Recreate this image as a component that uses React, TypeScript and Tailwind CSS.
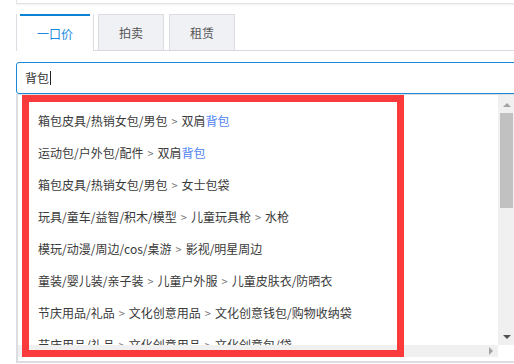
const font = { fontFamily: '"Noto Sans CJK SC", "Microsoft YaHei", sans-serif' };

type Part = { text: string; hit?: boolean };

const rows: Part[][] = [
  [{ text: "箱包皮具/热销女包/男包" }, { text: "双肩" }, { text: "背包", hit: true }],
  [{ text: "运动包/户外包/配件" }, { text: "双肩" }, { text: "背包", hit: true }],
  [{ text: "箱包皮具/热销女包/男包" }, { text: "女士包袋" }],
  [{ text: "玩具/童车/益智/积木/模型" }, { text: "儿童玩具枪" }, { text: "水枪" }],
  [{ text: "模玩/动漫/周边/cos/桌游" }, { text: "影视/明星周边" }],
  [{ text: "童装/婴儿装/亲子装" }, { text: "儿童户外服" }, { text: "儿童皮肤衣/防晒衣" }],
  [{ text: "节庆用品/礼品" }, { text: "文化创意用品" }, { text: "文化创意钱包/购物收纳袋" }],
  [{ text: "节庆用品/礼品" }, { text: "文化创意用品" }, { text: "文化创意包/袋" }],
];

// "双肩背包" is split so the hit part can be coloured; no separator between them
function Row({ parts }: { parts: Part[] }) {
  const out: React.ReactNode[] = [];
  parts.forEach((p, i) => {
    const joined = i > 0 && parts[i - 1].text === "双肩";
    if (i > 0 && !joined) {
      out.push(
        <span key={`s${i}`} className="mx-[4px] text-[11px] text-[#777]">
          &gt;
        </span>
      );
    }
    out.push(
      <span key={i} className={p.hit ? "text-[#4f83f0]" : "text-[#3a3a3a]"}>
        {p.text}
      </span>
    );
  });
  return <div className="flex h-8 shrink-0 items-center whitespace-nowrap pl-5 text-[12px]">{out}</div>;
}

function Tab({ label, active }: { label: string; active?: boolean }) {
  if (active) {
    return (
      <div className="flex h-[37px] w-[78px] flex-col border-x border-[#dcdde3] bg-white">
        <div className="mx-[3px] h-[2px] bg-[#0b84d6]" />
        <div className="flex flex-1 items-center justify-center text-[12px] text-[#1a8ae0]">{label}</div>
      </div>
    );
  }
  return (
    <div className="flex h-[36px] w-[66px] items-center justify-center border border-b-0 border-[#dcdde3] bg-[#f0f1f5] text-[12px] text-[#555]">
      {label}
    </div>
  );
}

export default function App() {
  return (
    <div className="h-[364px] w-[514px] overflow-hidden bg-white" style={font}>
      <div className="ml-4 w-[540px]">
        <div className="h-[4px] border-b border-l border-[#e4e4e4] shadow-[0_1px_2px_rgba(0,0,0,0.06)]" />

        <div className="mt-[10px] flex items-end">
          <Tab label="一口价" active />
          <div className="flex flex-1 items-end gap-[5px] border-b border-[#d8d9e0] pl-[4px]">
            <Tab label="拍卖" />
            <Tab label="租赁" />
          </div>
        </div>

        <div className="mt-[11px] flex h-[32px] items-center rounded-l-[3px] border border-[#1a88d8] pl-2 text-[12px] text-[#333]">
          背包
          <span className="ml-[1px] h-[14px] w-px bg-[#222]" />
        </div>

        <div className="relative flex h-[269px] w-[499px] flex-col border-b-2 border-l-2 border-t border-[#dcdde3]">
          <div className="flex h-[250px]">
            <div className="flex flex-1 flex-col overflow-hidden pt-[10px]">
              {rows.map((r, i) => (
                <Row key={i} parts={r} />
              ))}
            </div>
            <div className="flex w-[17px] flex-col items-center bg-[#f0f0f0]">
              <div className="mt-[8px] h-0 w-0 border-x-[4px] border-b-[4px] border-x-transparent border-b-[#a3a3a3]" />
              <div className="mt-[6px] h-[95px] w-[13px] bg-[#c1c1c1]" />
              <div className="flex-1" />
              <div className="mb-[6px] h-0 w-0 border-x-[4px] border-t-[4px] border-x-transparent border-t-[#505050]" />
            </div>
          </div>
          <div className="flex h-[12px]">
            <div className="flex flex-1 items-center justify-end bg-[#f0f0f0] pr-[5px]">
              <div className="h-0 w-0 border-y-[4px] border-l-[4px] border-y-transparent border-l-[#a3a3a3]" />
            </div>
            <div className="w-[17px] bg-white" />
          </div>

          {/* annotation box drawn over the list */}
          <div className="pointer-events-none absolute left-[4px] top-0 h-[262px] w-[382px] border-[7px] border-[#fb3a3b]" />
        </div>
      </div>
    </div>
  );
}
